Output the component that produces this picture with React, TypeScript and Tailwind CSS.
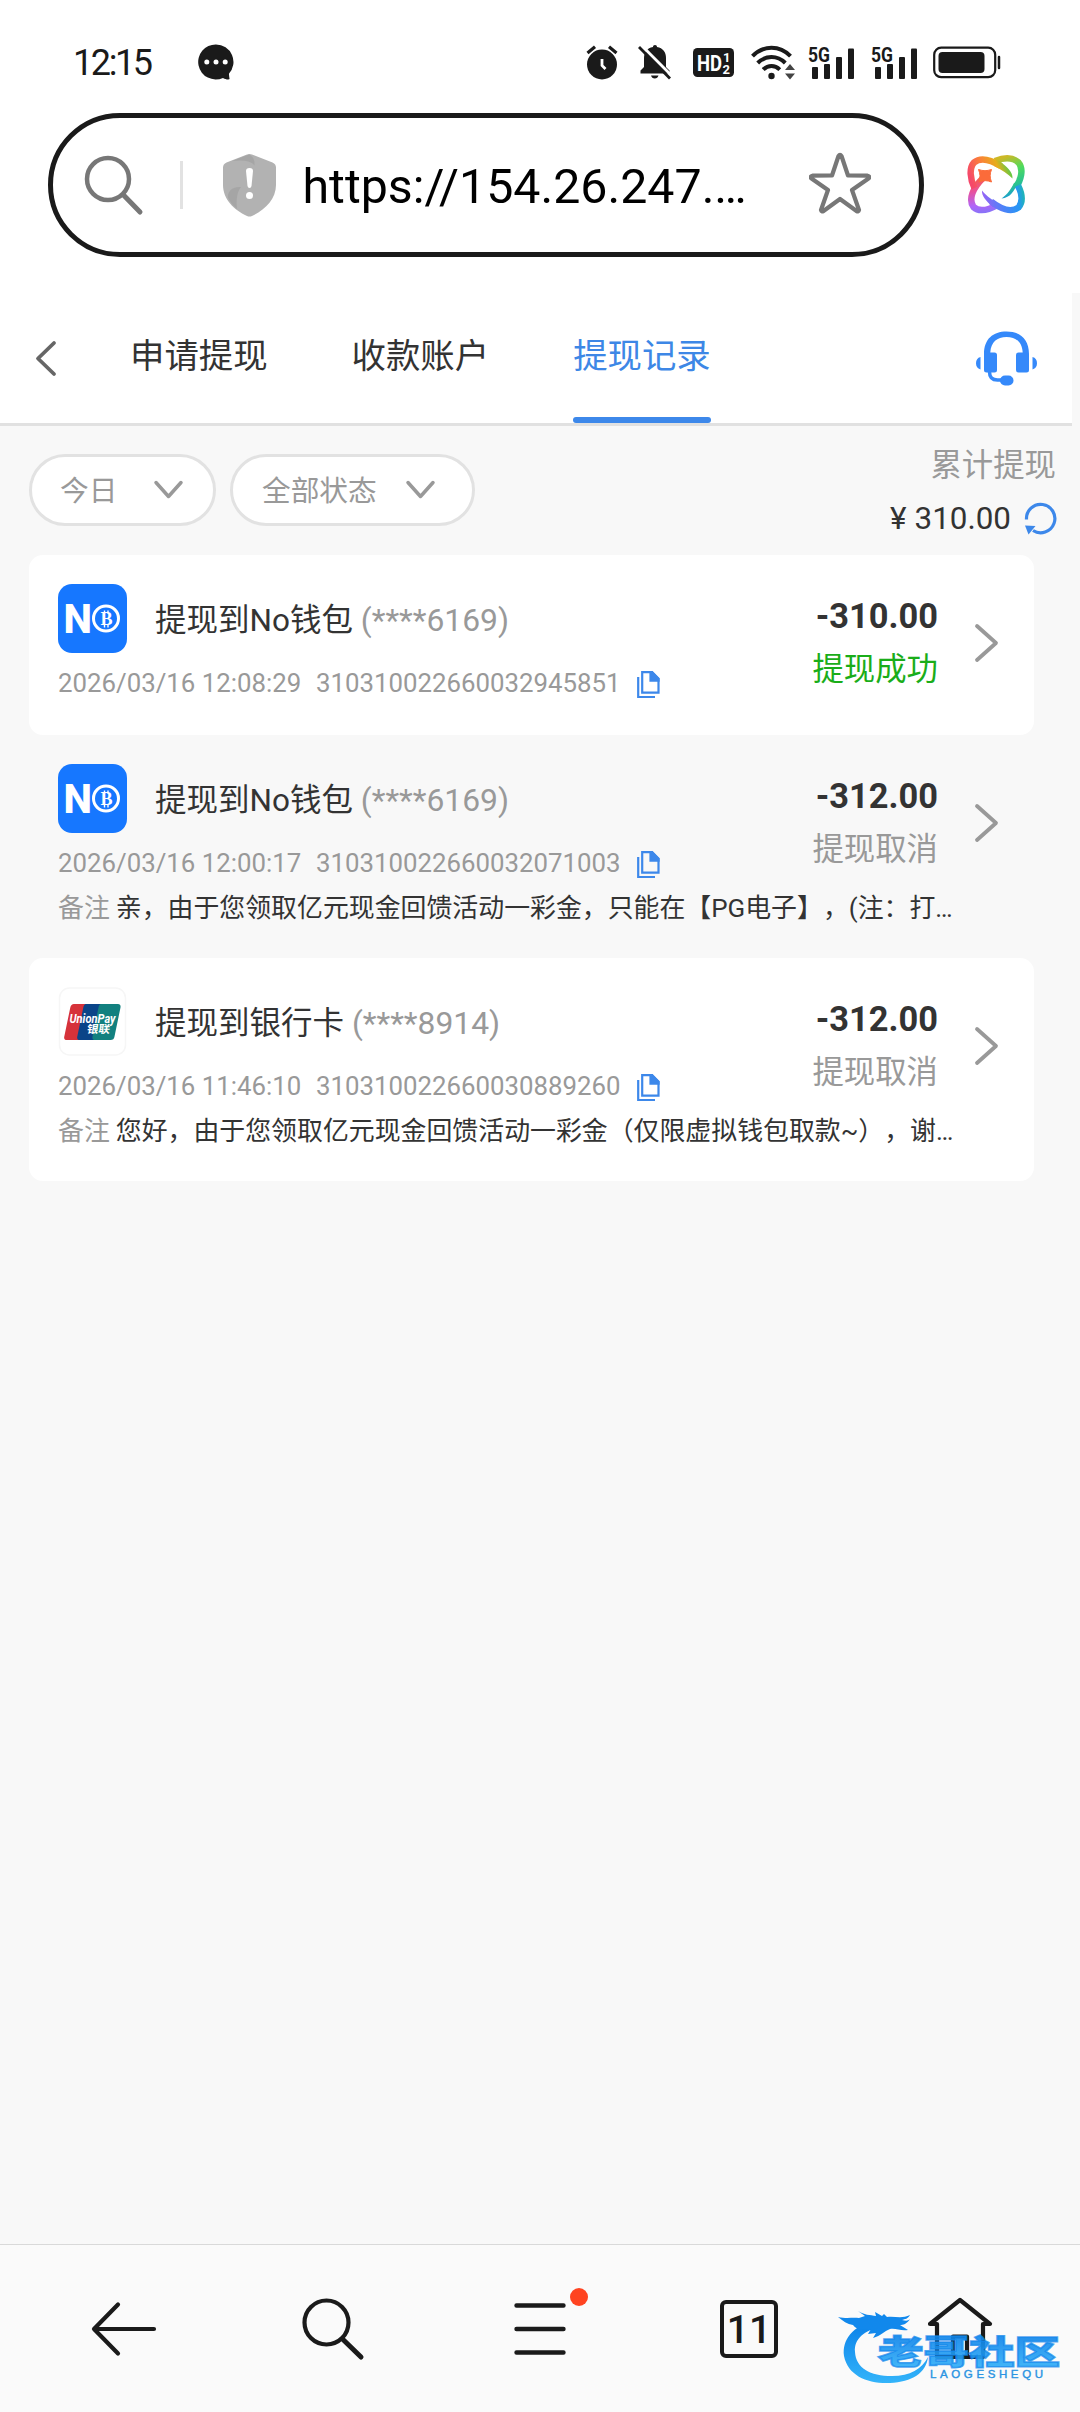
import React from 'react';

interface WithdrawRecord {
  id: string;
  logo: 'no' | 'union';
  title: string;
  account: string;
  time: string;
  amount: string;
  status: string;
  success?: boolean;
  remark?: string;
  white?: boolean;
}

const RECORDS: WithdrawRecord[] = [
  {
    id: '310310022660032945851',
    logo: 'no',
    title: '提现到No钱包',
    account: '(****6169)',
    time: '2026/03/16 12:08:29',
    amount: '-310.00',
    status: '提现成功',
    success: true,
    white: true,
  },
  {
    id: '310310022660032071003',
    logo: 'no',
    title: '提现到No钱包',
    account: '(****6169)',
    time: '2026/03/16 12:00:17',
    amount: '-312.00',
    status: '提现取消',
    remark: '亲，由于您领取亿元现金回馈活动一彩金，只能在【PG电子】，(注：打…',
  },
  {
    id: '310310022660030889260',
    logo: 'union',
    title: '提现到银行卡',
    account: '(****8914)',
    time: '2026/03/16 11:46:10',
    amount: '-312.00',
    status: '提现取消',
    remark: '您好，由于您领取亿元现金回馈活动一彩金（仅限虚拟钱包取款~），谢…',
    white: true,
  },
];

const Signal5G = () => (
  <svg width="47" height="47" viewBox="0 -6 47 47" fill="#1a1a1a">
    <text x="0" y="16.500" fontSize="21" fontWeight="700" textLength="22" lengthAdjust="spacingAndGlyphs">5G</text>
    <rect x="4" y="22" width="6" height="12" rx="1" />
    <rect x="16" y="19" width="6" height="15" rx="1" />
    <rect x="28" y="12" width="6" height="22" rx="1" />
    <rect x="40" y="3.500" width="6" height="30.500" rx="1" />
  </svg>
);

const StatusBar = () => (
  <div className="flex h-[113px] items-center pt-[11px] pl-[73px] text-[#1a1a1a]">
    <span className="w-[125px] pt-[2px] text-[36px] leading-none tracking-[-2.4px]">12:15</span>
    <svg width="36" height="36" viewBox="0 0 36 36">
      <path d="M18 .5a17.5 17.5 0 1 0 7 33.4c2 1 3.500 1.600 5.500 1.500 1.200-.1 1.200-1 .8-2l-.4-3.600A17.500 17.500 0 0 0 18 .5Z" fill="#1a1a1a" />
      <circle cx="8.800" cy="18" r="2.500" fill="#fff" />
      <circle cx="18" cy="18" r="2.500" fill="#fff" />
      <circle cx="27.200" cy="18" r="2.500" fill="#fff" />
    </svg>

    {/* Alarm */}
    <svg className="ml-[352px]" width="32" height="35" viewBox="0 0 32 35" fill="none">
      <circle cx="16" cy="19.500" r="15" fill="#1a1a1a" />
      <path d="M1.500 8 9 1.800M30.500 8 23 1.800" stroke="#1a1a1a" strokeWidth="3.200" />
      <path d="M16 14v6.500l3.500 3.500" stroke="#fff" strokeWidth="2.800" />
    </svg>

    {/* Muted bell */}
    <svg className="ml-[20px]" width="34" height="35" viewBox="0 0 34 35" fill="none">
      <path d="M17 0c-1.300 0-2 .9-2 2C9 3 6 7.500 6 13v9l-3.500 3.500v3h29v-3L28 22v-9c0-5.500-3-10-9-11 0-1.100-.7-2-2-2ZM13 30.500h7.500c-.6 2-1.800 3-3.700 3-2 0-3.200-1-3.800-3Z" fill="#1a1a1a" />
      <path d="M3 0 34 31" stroke="#fff" strokeWidth="3" />
      <path d="M1 2 32 33.500" stroke="#1a1a1a" strokeWidth="2.800" />
    </svg>

    {/* HD */}
    <svg className="ml-[21px]" width="41" height="29" viewBox="0 0 41 29" fill="#fff">
      <rect width="41" height="29" rx="4.500" fill="#1a1a1a" />
      <text x="4" y="22.500" fontSize="22" fontWeight="700" textLength="25" lengthAdjust="spacingAndGlyphs">HD</text>
      <text x="30" y="13.500" fontSize="13" fontWeight="700">1</text>
      <text x="29.500" y="25.500" fontSize="13" fontWeight="700">2</text>
    </svg>

    {/* Wi-Fi */}
    <svg className="ml-[17px]" width="45" height="35" viewBox="0 0 45 35" fill="none" stroke="#1a1a1a" strokeWidth="4">
      <path d="M1.500 11.200C7 5.500 13.500 2.800 20.500 2.800S34 5.500 39.500 11.200" />
      <path d="M6.700 18C10.500 14.200 15 12 20.500 12s10 2.200 13.800 6" />
      <path d="M12.200 24.600c2.500-2.400 5-3.600 8.300-3.600s5.800 1.200 8.300 3.600" />
      <circle cx="20.500" cy="31" r="3.200" fill="#1a1a1a" stroke="none" />
      <path d="m34 25 5-6 5 6ZM34 28.500l5 6 5-6Z" fill="#444" stroke="none" />
    </svg>

    <div className="ml-[12px] flex gap-4">
      <Signal5G />
      <Signal5G />
    </div>

    {/* Battery */}
    <svg className="ml-[15px]" width="68" height="33" viewBox="0 0 68 33" fill="none">
      <rect x="1.200" y="1.700" width="61" height="29.500" rx="7" stroke="#1a1a1a" strokeWidth="2.200" />
      <rect x="5.500" y="6" width="46" height="21" rx="4" fill="#1a1a1a" />
      <path d="M66 11v11" stroke="#1a1a1a" strokeWidth="2.500" strokeLinecap="round" />
    </svg>
  </div>
);

const BrowserLogo = () => (
  <svg width="60" height="60" viewBox="15 15 60 60" fill="none">
    <defs>
      <linearGradient id="lobeTl" gradientUnits="userSpaceOnUse" x1="22" y1="46" x2="61" y2="30">
        <stop offset="0" stopColor="#f5486a" />
        <stop offset=".4" stopColor="#fb8138" />
        <stop offset=".72" stopColor="#e6ad1c" />
        <stop offset="1" stopColor="#48cf4c" />
      </linearGradient>
      <linearGradient id="lobeTr" gradientUnits="userSpaceOnUse" x1="46" y1="20" x2="62" y2="60">
        <stop offset="0" stopColor="#cdb826" />
        <stop offset=".35" stopColor="#4fdb5c" />
        <stop offset=".7" stopColor="#28c193" />
        <stop offset="1" stopColor="#158cf0" />
      </linearGradient>
      <linearGradient id="lobeBr" gradientUnits="userSpaceOnUse" x1="30" y1="56" x2="72" y2="50">
        <stop offset="0" stopColor="#9b62f5" />
        <stop offset=".5" stopColor="#4a83f8" />
        <stop offset=".85" stopColor="#2696f4" />
        <stop offset="1" stopColor="#1fb3b9" />
      </linearGradient>
      <linearGradient id="lobeBl" gradientUnits="userSpaceOnUse" x1="30" y1="36" x2="34" y2="72">
        <stop offset="0" stopColor="#fa5c43" />
        <stop offset=".4" stopColor="#e8529c" />
        <stop offset=".8" stopColor="#b165f8" />
        <stop offset="1" stopColor="#8b72f8" />
      </linearGradient>
    </defs>
    <path d="M32 38C22 48 17 59 22.500 67c6 5.500 15 3 24-2" stroke="url(#lobeBl)" strokeWidth="6.500" />
    <path d="M44 21c9-3.500 18-3.500 23.500 1.500C73 29 70 40 64.500 48" stroke="url(#lobeTr)" strokeWidth="6.500" />
    <path d="M67.500 42C63 51 60 57.500 50.500 58.500 57 54 60 49 63 43Z" fill="url(#lobeTr)" />
    <path d="M23.500 48C19 39 18 28 23 22.500c7-6 18-2 27 3.500" stroke="url(#lobeTl)" strokeWidth="6.500" />
    <path d="M47 20.500C56 26 62 32 61.500 38.500 57 34 51 30 43 26Z" fill="url(#lobeTl)" />
    <path d="M40 61.500c9 7 20 11.500 27.500 6 5-6 3.500-14-.5-22" stroke="url(#lobeBr)" strokeWidth="6.500" />
    <path d="M31 50.500C34 54 39 59 47 63.500l-5 3.500C35 61 30.500 56 31 50.500Z" fill="url(#lobeBr)" />
    <path d="M27.500 29.500c5 1.600 8 1.600 13 0-1.800 4.500-1.800 8 0 12.500-4.500-1.800-8-1.800-12.500 0 1.500-4.500 1.300-8-.5-12.500Z" fill="#fb6b3a" stroke="#fb6b3a" strokeLinejoin="round" />
  </svg>
);

const AddressBar = () => (
  <div className="flex items-center pl-[48px]">
    <div className="flex h-[144px] w-[876px] items-center rounded-full border-[5px] border-[#1a1a1a] pl-[31px]">
      <svg width="60" height="62" viewBox="0 0 60 62" fill="none" stroke="#777" strokeWidth="4.500" strokeLinecap="round">
        <circle cx="24" cy="25" r="21" />
        <path d="m39.500 41 16.500 17" strokeWidth="5" />
      </svg>
      <div className="ml-[36px] h-12 w-[2.500px] bg-[#e2e2e2]" />
      <svg className="ml-[39px]" width="55" height="64" viewBox="0 0 55 64">
        <path d="M25 1.500q2.500-1 5 0l20.500 8q3.500 1.500 3.500 5V32c0 14-11 25-24 31q-2.500 1-5 0C12 57 1 46 1 32V14.500q0-3.500 3.500-5Z" fill="#b2b2b2" />
        <path d="M10 8 27 1.500c4 2 6 5 5.500 11Q28 6 10 8ZM19 34C10 33 5 39 6 45q3 6 9 11c-1-9 0-17 4-22Z" fill="#a5a5a5" />
        <path d="M24 18q0-3 3.500-3t3.500 3l-1.500 15q-.4 2-2 2t-2-2Z" fill="#fff" />
        <circle cx="27.500" cy="42.500" r="3.500" fill="#fff" />
      </svg>
      <span className="ml-[26px] w-[446px] pt-[5px] text-[48.300px] leading-none whitespace-nowrap text-black">https://154.26.247.…</span>
      <svg className="mb-[4px] ml-[60px]" width="62" height="62" viewBox="0 0 62 62" fill="none" stroke="#777" strokeWidth="4.200" strokeLinejoin="round">
        <path d="M29.500 4q1.500-2.500 3 0l6.500 19.500 19.500.2q3 .8 1 2.800L43 38l7 20q-.5 2-2.500 1L31 47 14.500 59q-2 1-2.500-1l7-20L2.500 26.500q-2-2 1-2.800l19.500-.2Z" />
      </svg>
    </div>
    <div className="ml-[42px]">
      <BrowserLogo />
    </div>
  </div>
);

const TabBar = () => (
  <div className="flex h-[133px] w-[1072px] items-stretch border-b-[3px] border-[#e1e1e1] bg-white text-[34.400px] text-[#333]">
    <svg className="mt-[47px] ml-[34px]" width="24" height="37" viewBox="0 0 24 37" fill="none" stroke="#666" strokeWidth="3.800" strokeLinecap="round" strokeLinejoin="round">
      <path d="M20 3 4 18.500 20 34" />
    </svg>
    <div className="ml-[72px] flex gap-[84px] leading-[127px]">
      <span>申请提现</span>
      <span>收款账户</span>
      <div className="flex flex-col text-[#3d87e6]">
        <span className="h-[124px]">提现记录</span>
        <span className="h-[6px] rounded-full bg-[#3d88ea]" />
      </div>
    </div>
    <svg className="mt-[37px] mr-[34px] ml-auto" width="63" height="57" viewBox="0 0 63 57" fill="#3589fa">
      <path d="M9 24C9 9 18 1.500 31.500 1.500S54 9 54 24v16q0 2.500-2.500 2.500h-8Q41 42.500 41 40V25q0-2.500 2.500-2.500h4.200C47 12 41 7 31.500 7S16 12 15.300 22.500h4.200Q22 22.500 22 25v15q0 2.500-2.500 2.500h-8Q9 42.500 9 40Z" />
      <path d="M5.500 27v12.500C2.500 38.500 1 36.500 1 33.200s1.500-5.400 4.500-6.200ZM57.500 27v12.500c3-1 4.500-3 4.500-6.300s-1.500-5.400-4.500-6.200Z" />
      <path d="M14.500 42c0 5.500 3 8 8 8h6" fill="none" stroke="#3589fa" strokeWidth="3.500" />
      <rect x="25" y="45.500" width="13.500" height="10" rx="5" />
    </svg>
  </div>
);

const FilterPill = ({ label, className }: { label: string; className: string }) => (
  <div className={`flex h-[72px] items-center justify-between rounded-full border-[3px] border-[#e2e2e2] bg-white text-[28.700px] text-[#999] ${className}`}>
    <span className="pt-[3px]">{label}</span>
    <svg width="31" height="20" viewBox="0 0 31 20" fill="none" stroke="#999" strokeWidth="3.500" strokeLinecap="round" strokeLinejoin="round">
      <path d="m3 2.500 12.500 14L28 2.500" />
    </svg>
  </div>
);

const Filters = () => (
  <div className="flex h-[129px] items-start pr-[23px] pl-[29px]">
    <FilterPill label="今日" className="mt-[28px] w-[187px] pr-[29px] pl-[28px]" />
    <FilterPill label="全部状态" className="mt-[28px] ml-[14px] w-[245px] pr-[36px] pl-[29px]" />
    <div className="mt-[13px] ml-auto text-[31.400px]">
      <div className="pr-[1px] text-right leading-[54px] text-[#999]">累计提现</div>
      <div className="flex h-[52px] items-center justify-end text-[#333]">
        <span className="mr-[8px]">¥</span>
        <span>310.00</span>
        <svg className="mb-[2px] ml-[13px]" width="33" height="34" viewBox="0 0 33 34" fill="none">
          <path d="M2.500 18.500A14.200 14.200 0 1 1 9 29.500" stroke="#3d88ea" strokeWidth="3.200" />
          <path d="M1 24.500 11.500 25 4.500 33.500Z" fill="#3d88ea" />
        </svg>
      </div>
    </div>
  </div>
);

const NoLogo = () => (
  <svg width="69" height="69" viewBox="0 0 69 69">
    <rect width="69" height="69" rx="14" fill="#1677ff" />
    <text x="5.500" y="48.500" fontSize="40" fontWeight="800" fill="#fff" textLength="28.500" lengthAdjust="spacingAndGlyphs">N</text>
    <circle cx="48" cy="34.500" r="12.500" fill="none" stroke="#fff" strokeWidth="3" />
    <text x="42.500" y="41" fontSize="18" fontWeight="700" fill="#fff" fontFamily="Liberation Serif">B</text>
    <path d="M46.500 26.500v3M50 26.500v3M46.500 40.500v3M50 40.500v3" stroke="#fff" strokeWidth="1.400" />
  </svg>
);

const UnionPayLogo = () => (
  <svg width="69" height="69" viewBox="0 0 69 69">
    <rect x="1.500" y="1" width="66" height="67" rx="10" fill="#fff" stroke="#f6f6f6" strokeWidth="1.500" />
    <path d="M16 17h14l-8 36H9q-3.500 0-2.700-3.500l6-29Q13 17 16 17Z" fill="#d6323a" />
    <path d="M28 17h16l-8 36H22q-3.500 0-2.700-3.500l6-29Q26 17 28 17Z" fill="#0a4488" />
    <path d="M43 17h17q3 0 2.500 3.500l-6 29Q56 53 52.500 53H37q-3 0-2.500-3.500l6-29Q41 17 43 17Z" fill="#12807f" />
    <g fill="#fff" fontWeight="700">
      <text x="11.500" y="35.500" fontSize="12.500" fontStyle="italic" textLength="46" lengthAdjust="spacingAndGlyphs">UnionPay</text>
      <text x="29" y="46" fontSize="11" textLength="23" lengthAdjust="spacingAndGlyphs" transform="skewX(-8)" style={{ transformOrigin: '40px 42px' }}>银联</text>
    </g>
  </svg>
);

const CopyIcon = () => (
  <svg className="mt-[3px]" width="23" height="28" viewBox="0 0 23 28" fill="none" stroke="#3d88ea" strokeWidth="2.200">
    <path d="M1.200 6v20H18" />
    <path d="M5.200 1.200H15l6.500 6.500v14H5.200Z" />
    <path d="M13.500 1.200H15l6.500 6.500v2h-8Z" fill="#3d88ea" />
  </svg>
);

const RecordCard = ({ record }: { record: WithdrawRecord }) => (
  <div className={`ml-[29px] w-[1005px] rounded-[14px] pt-[29px] pl-[29px] ${record.white ? 'bg-white' : ''} ${record.remark ? 'h-[223px]' : 'h-[180px]'}`}>
    <div className="flex h-[117px]">
      <div className="flex-1">
        <div className="flex h-[69px] items-center">
          {record.logo === 'no' ? <NoLogo /> : <UnionPayLogo />}
          <span className="ml-[28px] pt-[5px] text-[31.500px] leading-none whitespace-pre text-[#333]">
            {record.title}
            <span className="text-[31.800px] text-[#999]"> {record.account}</span>
          </span>
        </div>
        <div className="mt-[12px] flex h-9 items-center text-[25.800px] text-[#999]">
          <span className="w-[258px] pt-[1px] whitespace-nowrap">{record.time}</span>
          <span className="w-[321px] pt-[1px]">{record.id}</span>
          <CopyIcon />
        </div>
      </div>
      <div className="flex flex-col text-right">
        <span className="mt-[12px] text-[34.400px] leading-[40px] font-bold text-[#333]">{record.amount}</span>
        <span className={`mt-[12px] text-[31.400px] leading-[44px] ${record.success ? 'text-[#1aad19]' : 'text-[#999]'}`}>
          {record.status}
        </span>
      </div>
      <svg className="mt-[39px] mr-[34px] ml-[35px]" width="27" height="40" viewBox="0 0 27 40" fill="none" stroke="#999" strokeWidth="3.800" strokeLinecap="round" strokeLinejoin="round">
        <path d="m4 3 19 17L4 37" />
      </svg>
    </div>
    {record.remark && (
      <div className="mt-[9px] h-9 text-[25.900px] leading-9 whitespace-nowrap text-[#333] [text-spacing-trim:space-all]">
        <span className="mr-[6px] text-[#999]">备注</span>
        {record.remark}
      </div>
    )}
  </div>
);

const Watermark = () => (
  <svg className="absolute right-[16px] bottom-[24px]" width="226" height="82" viewBox="0 0 226 82">
    <defs>
      <linearGradient id="brand" x1="0" y1="0" x2="0" y2="1">
        <stop offset="0" stopColor="#0a7fe8" />
        <stop offset="1" stopColor="#33b4fa" />
      </linearGradient>
    </defs>
    <path d="M38 14C14 20 4 34 6 50c4 20 24 28 46 27 22-1 36-10 38-26-6 12-18 19-36 19C32 70 18 62 17 46 16 33 26 24 44 21Z" fill="url(#brand)" />
    <path d="M0 11c10 2 14 0 21 1l6-2-7-5c6 4 12 4 18 5l-1-4 7 4 2-2 3 3c8-1 15 2 23-2-2 4-5 4-8 5 4 1 6 1 8-1-3 5-7 6-10 6l8 5c-8 1-12-2-18-1-6 2-9 7-17 9l3-5-8 1 3-5c-10 2-15 0-18-4-6-1-10-4-15-8Z" fill="#1188ec" />
    <text x="40" y="58" fontSize="33" fontWeight="900" textLength="182" lengthAdjust="spacingAndGlyphs" fill="url(#brand)" stroke="#1488ec" strokeWidth="1.600" fillOpacity=".9" strokeOpacity=".75">
      老哥社区
    </text>
    <text x="92" y="71.500" fontSize="11.500" fontFamily="Liberation Sans" fill="#2a94e2" stroke="#2a94e2" strokeWidth=".4" textLength="113">LAOGESHEQU</text>
  </svg>
);

const BottomNav = () => (
  <nav className="relative mt-auto h-[168px] border-t border-[#d9d9d9] bg-[#fafafa]">
    <div className="flex h-[168px] items-center pl-[90px]">
      <svg width="68" height="60" viewBox="0 0 68 60" fill="none" stroke="#1a1a1a" strokeWidth="4.200" strokeLinecap="round" strokeLinejoin="round">
        <path d="M64 30H4M28 5.500 4 30l24 24.500" />
      </svg>
      <svg className="ml-[142px]" width="66" height="66" viewBox="0 0 66 66" fill="none" stroke="#1a1a1a" strokeWidth="4.200" strokeLinecap="round">
        <circle cx="26.500" cy="26.500" r="22" />
        <path d="M43 43.500 61 61" strokeWidth="5" />
      </svg>
      <div className="relative ml-[146px]">
        <svg width="56" height="56" viewBox="0 0 56 56" fill="none" stroke="#1a1a1a" strokeWidth="4.400" strokeLinecap="round">
          <path d="M4.500 4.500h47M4.500 28h47M4.500 51.500h47" />
        </svg>
        <span className="absolute top-[-13px] left-[58px] size-[18px] rounded-full bg-[#ff4320]" />
      </div>
      <div className="ml-[152px] flex size-[58px] items-center justify-center rounded-[6px] border-[4px] border-[#1a1a1a] pt-[3px] text-[39px] leading-none font-medium text-[#1a1a1a]">
        11
      </div>
      <svg className="ml-[149px]" width="66" height="64" viewBox="0 0 66 64" fill="none" stroke="#1a1a1a" strokeWidth="4.200" strokeLinejoin="round" strokeLinecap="round">
        <path d="M10 27H3L33 3l30 24h-7v33H10Z" />
        <path d="M26 60V39.500h14V60" />
      </svg>
    </div>
    <Watermark />
  </nav>
);

export default function App() {
  return (
    <div className="flex h-[2412px] w-[1080px] flex-col overflow-hidden bg-[#f8f8f8] font-['Roboto','Noto_Sans_CJK_SC',sans-serif]" lang="zh-CN">
      <header className="h-[293px] bg-white">
        <StatusBar />
        <AddressBar />
      </header>
      <TabBar />
      <Filters />
      <main>
        {RECORDS.map((record) => (
          <RecordCard key={record.id} record={record} />
        ))}
      </main>
      <BottomNav />
    </div>
  );
}
